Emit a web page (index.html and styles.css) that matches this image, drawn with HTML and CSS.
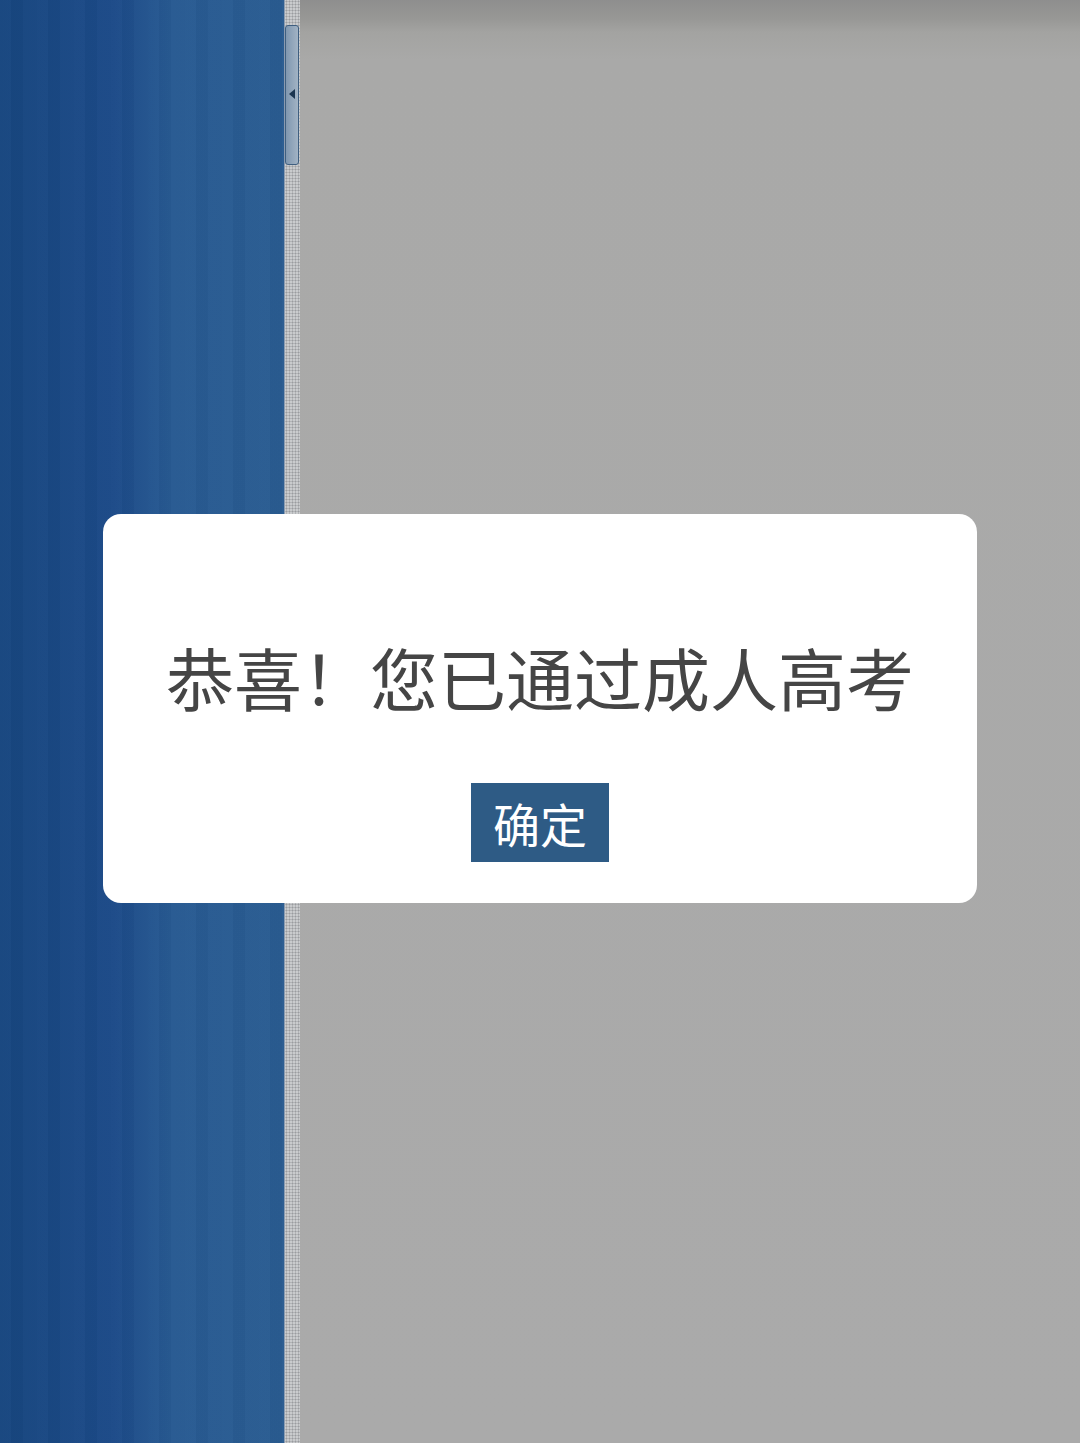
FILE: index.html
```html
<!doctype html>
<html lang="zh-CN">
<head>
  <meta charset="utf-8">
  <title>成人高考</title>
  <meta name="viewport" content="width=device-width, initial-scale=1">
  <link rel="stylesheet" href="styles.css">
</head>
<body>
  <div class="app">
    <div class="sidebar"></div>
    <div class="splitter">
      <div class="handle">
        <svg width="8" height="10" viewBox="0 0 8 10">
          <polygon points="7,0 7,10 1,5" fill="#1b3550"/>
        </svg>
      </div>
    </div>
    <div class="main"></div>
  </div>

  <!-- result dialog -->
  <div class="overlay">
    <div class="dialog">
      <div class="dialog-text">恭喜！您已通过成人高考</div>
      <button class="ok-btn">确定</button>
    </div>
  </div>
</body>
</html>
```

FILE: styles.css
```css
html,
body {
  margin: 0;
  padding: 0;
  height: 100%;
  font-family: "Noto Sans CJK SC", "Noto Sans", sans-serif;
}

.app {
  display: flex;
  height: 1443px;
}

.sidebar {
  width: 284px;
  background:
    repeating-linear-gradient(90deg, rgba(255,255,255,0.015) 0 11px, rgba(0,0,0,0.02) 11px 23px, rgba(255,255,255,0.01) 23px 37px),
    linear-gradient(90deg, #17467f 0%, #1c4a88 40%, #285a92 60%, #2a5c91 100%);
}

.splitter {
  width: 16px;
  background-color: #c9cbcd;
  background-image: radial-gradient(circle, #9a9c9f 0.8px, transparent 1.2px);
  background-size: 3px 3px;
  border-left: 1px solid #8a9bb0;
  padding-top: 25px;
  box-sizing: border-box;
}

.handle {
  height: 140px;
  margin: 0 1px 0 0;
  border: 1px solid #3f5f80;
  border-radius: 3px;
  background: linear-gradient(90deg, #7f97b0, #a2b3c4);
  display: flex;
  align-items: center;
  justify-content: center;
  box-sizing: border-box;
}

.handle svg {
  margin-top: -2px;
}

.main {
  flex: 1;
  background: linear-gradient(180deg, #8e8e8e 0, #979795 18px, #a3a3a1 32px, #a9a9a8 60px, #aaaaaa 100%);
}

.overlay {
  position: absolute;
  left: 0;
  top: 0;
  width: 100%;
  height: 1443px;
  display: flex;
  justify-content: center;
  align-items: flex-start;
  padding-top: 514px;
  box-sizing: border-box;
}

.dialog {
  width: 874px;
  height: 389px;
  background: #fff;
  border-radius: 18px;
  box-sizing: border-box;
  padding: 123px 0 41px;
  display: flex;
  flex-direction: column;
  align-items: center;
}

.dialog-text {
  font-size: 68px;
  line-height: 80px;
  color: #454545;
}

.ok-btn {
  margin-top: 66px;
  width: 138px;
  height: 79px;
  border: 0;
  padding: 0;
  background: #2e5b85;
  color: #fff;
  font-family: inherit;
  font-size: 47px;
  line-height: 1;
  cursor: pointer;
}
```
